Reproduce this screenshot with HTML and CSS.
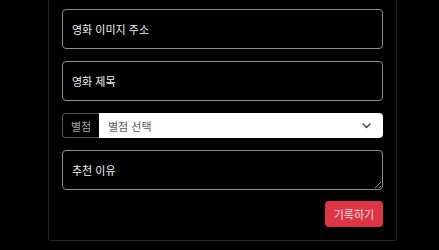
FILE: index.html
```html
<!DOCTYPE html>
<html lang="ko">
  <head>
    <meta charset="UTF-8" />
    <meta name="viewport" content="width=device-width, initial-scale=1.0" />
    <title>영화 기록</title>
    <link rel="stylesheet" href="styles.css">
  </head>
  <body>
    <div class="record-card">
      <form class="record-form">
        <input class="field" type="text" placeholder="영화 이미지 주소" />
        <input class="field" type="text" placeholder="영화 제목" />

        <!-- 별점 선택 -->
        <div class="rating-group">
          <span class="rating-label">별점</span>
          <div class="rating-select">
            <span>별점 선택</span>
            <svg width="9" height="6" viewBox="0 0 9 6">
              <path d="M1 1l3.5 3.5L8 1" fill="none" stroke="#343a40" stroke-width="1.3" stroke-linecap="round" stroke-linejoin="round" />
            </svg>
          </div>
        </div>

        <textarea class="field field-area" placeholder="추천 이유"></textarea>

        <div class="actions">
          <button class="btn-record" type="button">기록하기</button>
        </div>
      </form>
    </div>
  </body>
</html>
```

FILE: styles.css
```css
:root {
  --bg: #000000;
  --card-line: #262626;
  --field-line: #8e8e8e;
  --text: #f2f2f2;
  --danger: #dc3545;
}

body {
  margin: 0;
  background: var(--bg);
  font-family: "Noto Sans CJK KR", "Noto Sans", sans-serif;
  color: var(--text);
}

/* 카드 */
.record-card {
  width: 321px;
  margin: -30px 0 0 48px;
  padding: 38px 13px 13px;
  border: 1px solid var(--card-line);
  border-radius: 2px;
  background: var(--bg);
}

.record-form {
  display: flex;
  flex-direction: column;
  gap: 12px;
}

.field {
  box-sizing: border-box;
  width: 100%;
  height: 40px;
  margin: 0;
  padding: 0 9px;
  background: var(--bg);
  border: 1px solid var(--field-line);
  border-radius: 4px;
  color: var(--text);
  font-family: inherit;
  font-size: 11px;
  outline: none;
}

.field::placeholder {
  color: var(--text);
  opacity: 1;
}

.field-area {
  display: block;
  padding: 11px 9px;
  line-height: 16px;
  resize: vertical;
}

/* 별점 */
.rating-group {
  display: flex;
  height: 25px;
}

.rating-label {
  box-sizing: border-box;
  width: 37px;
  display: flex;
  align-items: center;
  justify-content: center;
  border: 1px solid #555;
  border-right: none;
  border-radius: 4px 0 0 4px;
  color: #a8a8a8;
  font-size: 11px;
}

.rating-select {
  flex: 1;
  display: flex;
  align-items: center;
  justify-content: space-between;
  padding: 0 12px 0 9px;
  background: #ffffff;
  border-radius: 0 4px 4px 0;
  color: #5a5a5a;
  font-size: 11px;
}

.actions {
  display: flex;
  justify-content: flex-end;
  margin-top: -1px;
}

.btn-record {
  width: 58px;
  height: 26px;
  padding: 0;
  border: none;
  border-radius: 4px;
  background: var(--danger);
  color: #f5dadd;
  font-family: inherit;
  font-size: 11px;
}
```
